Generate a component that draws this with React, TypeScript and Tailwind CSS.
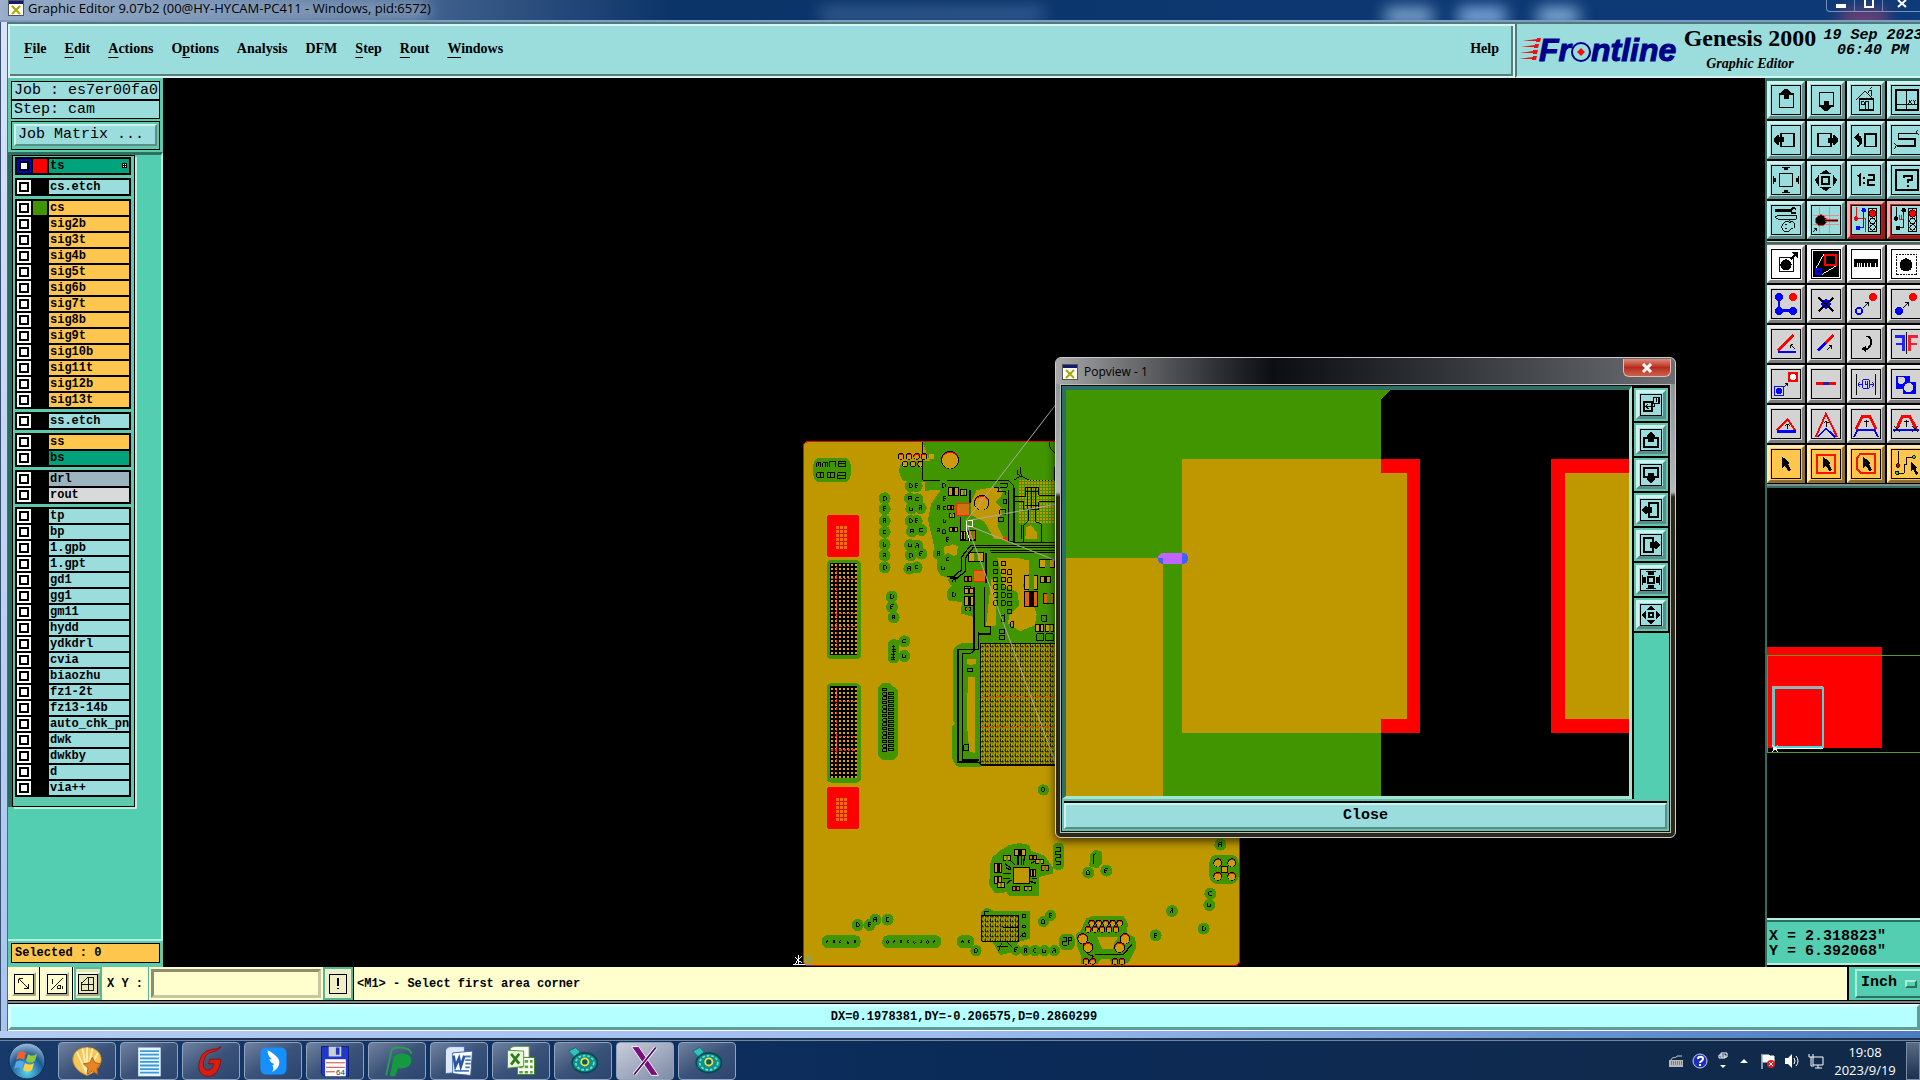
import React from "react";

type Point = [number, number];

type Layer = {
  name: string;
  fill: string;
  swatch?: string;
  active?: boolean;
};

const ORANGE = "bg-[#ffc64e]";
const AQUA = "bg-[#9bdcdc]";
const TEAL = "bg-[#00a37c]";

const layerGroups: Layer[][] = [
  [{ name: "ts", fill: TEAL, swatch: "bg-[#ff0000]", active: true }],
  [{ name: "cs.etch", fill: AQUA }],
  [
    { name: "cs", fill: ORANGE, swatch: "bg-[#419600]" },
    { name: "sig2b", fill: ORANGE },
    { name: "sig3t", fill: ORANGE },
    { name: "sig4b", fill: ORANGE },
    { name: "sig5t", fill: ORANGE },
    { name: "sig6b", fill: ORANGE },
    { name: "sig7t", fill: ORANGE },
    { name: "sig8b", fill: ORANGE },
    { name: "sig9t", fill: ORANGE },
    { name: "sig10b", fill: ORANGE },
    { name: "sig11t", fill: ORANGE },
    { name: "sig12b", fill: ORANGE },
    { name: "sig13t", fill: ORANGE },
  ],
  [{ name: "ss.etch", fill: AQUA }],
  [
    { name: "ss", fill: ORANGE },
    { name: "bs", fill: TEAL },
  ],
  [
    { name: "drl", fill: "bg-[#9cb4bf]" },
    { name: "rout", fill: "bg-[#d9d9d9]" },
  ],
  [
    "tp",
    "bp",
    "1.gpb",
    "1.gpt",
    "gd1",
    "gg1",
    "gm11",
    "hydd",
    "ydkdrl",
    "cvia",
    "biaozhu",
    "fz1-2t",
    "fz13-14b",
    "auto_chk_pnl",
    "dwk",
    "dwkby",
    "d",
    "via++",
  ].map((name) => ({ name, fill: AQUA })),
];

// [label, index of the underlined letter]
const menus: [string, number][] = [
  ["File", 0],
  ["Edit", 0],
  ["Actions", 0],
  ["Options", 1],
  ["Analysis", -1],
  ["DFM", -1],
  ["Step", 0],
  ["Rout", 0],
  ["Windows", 0],
];

const BEVEL_AQUA =
  "bg-[#9bdcdc] border-t-[#cdf3f1] border-l-[#cdf3f1] border-r-[#5b8c8c] border-b-[#5b8c8c]";

/* ---------- toolbar icons, all on a 30x30 grid ---------- */

const arrowUp = (
  <path d="M14 3h3v1h1v1h1v1h1v2h-2v6h-5V8h-3V6h1V5h1V4h1z" fill="#000" />
);

const icons: Record<string, React.ReactNode> = {
  up: (
    <>
      <rect x="8" y="9" width="15" height="14" fill="none" stroke="#000" strokeWidth="2" />
      {arrowUp}
    </>
  ),
  down: (
    <>
      <rect x="8" y="7" width="15" height="14" fill="none" stroke="#000" strokeWidth="2" />
      <g transform="translate(0 30) scale(1 -1)">{arrowUp}</g>
    </>
  ),
  left: (
    <>
      <rect x="10" y="8" width="14" height="14" fill="none" stroke="#000" strokeWidth="2" />
      <g transform="translate(-1 30) rotate(-90)">{arrowUp}</g>
    </>
  ),
  right: (
    <>
      <rect x="6" y="8" width="14" height="14" fill="none" stroke="#000" strokeWidth="2" />
      <g transform="translate(31 0) rotate(90)">{arrowUp}</g>
    </>
  ),
  home: (
    <g fill="none" stroke="#000">
      <path d="M8 14h15v12H8z" strokeWidth="2" />
      <path d="M4 15L14 5l10 10M18 8V5h3v6M20 3l2-2M14 26v-9h4v9M10 17h3v3h-3zM8 14h16" />
    </g>
  ),
  quad: (
    <g fill="none" stroke="#000">
      <rect x="4" y="4" width="24" height="22" strokeWidth="2" />
      <path d="M15.500 4v22M4 19.500h24M18 15l3 4M21 15l-3 4M23 15l1 2 2-2M24 17v2" />
    </g>
  ),
  undo: (
    <>
      <rect x="14" y="9" width="12" height="13" fill="none" stroke="#000" strokeWidth="2" />
      <path d="M2 12l5-4v3h2l2 3v5l-3 3H5v-2h2l1-2v-3H7v2z" fill="#000" />
    </>
  ),
  snake: (
    <g fill="none" stroke="#000">
      <path d="M25 8H7v6h18v7H5" strokeWidth="2" />
      <path d="M25 8l3-4M25 8l4 1M5 21l-3-3M5 21l-3 4" />
    </g>
  ),
  zoomIn: (
    <>
      <rect x="8" y="8" width="14" height="14" fill="none" stroke="#000" strokeWidth="2" />
      <path d="M9 1h11l-3 2v1h-4V3zM9 29h11l-3-2v-1h-4v1zM1 10v10l2-3h1v-4H3zM29 10v10l-2-3h-1v-4h1z" />
    </>
  ),
  zoomOut: (
    <>
      <rect x="11" y="12" width="7" height="7" fill="none" stroke="#000" strokeWidth="2" />
      <path d="M15 4l5 4v1H9V8zM15 27l5-4v-1H9v1zM3 15l4-5h1v11H7zM27 15l-4-5h-1v11h1z" />
    </>
  ),
  ratio: (
    <path
      d="M6 11l3-2v12M13 12v2M13 17v2M17 10h7v5h-7v5h8"
      fill="none"
      stroke="#000"
      strokeWidth="2"
    />
  ),
  help: (
    <g fill="none" stroke="#000" strokeWidth="2">
      <rect x="4" y="4" width="24" height="22" />
      <path d="M13 13v-2h8v4h-4v3M17 20v2" />
    </g>
  ),
  tools: (
    <g fill="none" stroke="#000">
      <path d="M3 5h17" strokeWidth="3" />
      <path d="M26 3l-4-1-2 3 2 3 4-1" strokeWidth="2" />
      <path d="M3 12l4-2h19v4H7zM11 25c-2-6 3-9 8-9s7 5 4 8c-2 1-3 0-4 2s-6 3-8-1zM14 20h2M18 18h2M14 24h2" />
    </g>
  ),
  node: (
    <>
      <path d="M8 1v28M19 1v28M1 10h28M1 20h28" stroke="#e08a8a" />
      <circle cx="9.500" cy="15.500" r="6" fill="#000" stroke="#f33" />
      <path d="M14 15.500h14" stroke="#f33" strokeWidth="4" />
      <path d="M12 15.500h16" stroke="#000" strokeWidth="2" />
      <path d="M1 28l4-4M2 24h3v3" fill="none" stroke="#000" />
    </>
  ),
  signalBlue: (
    <>
      <path d="M4.500 1v12H14v15" fill="none" stroke="#f00" />
      <path d="M12.500 5v18h-6" fill="none" stroke="#00f" />
      <circle cx="4.500" cy="13.500" r="2.500" fill="#f00" />
      <circle cx="12.500" cy="4.500" r="2.500" fill="#00f" />
      <circle cx="6.500" cy="23.500" r="2.500" fill="#00f" />
      <g fill="none" stroke="#000">
        <rect x="17.500" y="2.500" width="9" height="25" />
        <circle cx="22" cy="8" r="4" fill="#f00" />
        <circle cx="22" cy="16" r="3" />
        <circle cx="22" cy="23" r="3" />
      </g>
    </>
  ),
  signalDark: (
    <>
      <path d="M4.500 1v12M12.500 5v18h-6" fill="none" stroke="#000" />
      <path d="M7 14h5M8 10v4M10 10v4M12 10v4" stroke="#f00" />
      <circle cx="4.500" cy="13.500" r="2.500" />
      <circle cx="12.500" cy="4.500" r="2.500" />
      <circle cx="6.500" cy="23.500" r="2.500" />
      <g fill="none" stroke="#000">
        <rect x="17.500" y="2.500" width="9" height="25" />
        <circle cx="22" cy="8" r="4" fill="#f00" />
        <circle cx="22" cy="16" r="3" />
        <circle cx="22" cy="23" r="3" />
      </g>
    </>
  ),
  pad: (
    <>
      <rect x="7.500" y="8.500" width="15" height="15" fill="none" stroke="#000" />
      <circle cx="15" cy="16" r="6" />
      <path d="M20 10l5-5" stroke="#000" strokeWidth="2" />
      <path d="M21 2h7v7l-2-2-3-3z" />
    </>
  ),
  resize: (
    <>
      <rect x="1" y="1" width="28" height="28" fill="#000" />
      <path d="M13 4L4 20M26 17L11 26" stroke="#fff" />
      <rect x="14" y="5" width="12" height="11" fill="none" stroke="#f00" strokeWidth="2" />
      <rect x="4" y="20" width="6" height="6" fill="none" stroke="#00f" strokeWidth="2" />
    </>
  ),
  ruler: (
    <path d="M2 10h26v8h-2v-4h-1v4h-2v-4h-1v4h-2v-4h-1v4h-2v-4h-1v4h-2v-4h-1v4h-2v-4h-1v4H9v-4H8v4H6v-4H5v4H2z" />
  ),
  select: (
    <>
      <rect x="4.500" y="4.500" width="22" height="22" fill="none" stroke="#000" strokeDasharray="2 1" />
      <circle cx="15" cy="16" r="7" />
    </>
  ),
  connect: (
    <>
      <path d="M7.500 7v15H22" fill="none" stroke="#00f" strokeWidth="3" />
      <circle cx="7.500" cy="7.500" r="4.500" fill="#00f" />
      <circle cx="22.500" cy="7.500" r="4.500" fill="#f00" />
      <circle cx="7.500" cy="22.500" r="4.500" fill="#00f" />
      <circle cx="22.500" cy="22.500" r="4.500" fill="#00f" />
    </>
  ),
  remove: (
    <>
      <circle cx="15" cy="15" r="5" fill="#00f" />
      <path d="M7 8l16 15M23 8L7 23" stroke="#000" strokeWidth="2" />
    </>
  ),
  copy: (
    <>
      <circle cx="22.500" cy="7.500" r="4.500" fill="#f00" />
      <circle cx="7.500" cy="22.500" r="3.500" fill="none" stroke="#00f" strokeWidth="2" />
      <path d="M12 19l6-6M14 13h4v4" fill="none" stroke="#000" />
    </>
  ),
  move: (
    <>
      <circle cx="22.500" cy="7.500" r="4.500" fill="#f00" />
      <circle cx="7.500" cy="22.500" r="4.500" fill="#00f" />
      <path d="M12 19l6-6M14 13h4v4" fill="none" stroke="#000" />
    </>
  ),
  angle: (
    <>
      <path d="M6 22L23 5" stroke="#f00" strokeWidth="3" />
      <path d="M6 24h20" stroke="#00f" strokeWidth="2" />
      <path d="M24 20l-4-4M20 19v-3h3" fill="none" stroke="#000" />
    </>
  ),
  stretch: (
    <>
      <path d="M6 22l8-8" stroke="#00f" strokeWidth="3" />
      <path d="M14 14l9-9" stroke="#f00" strokeWidth="3" />
      <path d="M17 21l4-4M18 17h3v3" fill="none" stroke="#000" />
    </>
  ),
  rotate: (
    <>
      <path d="M15 7h3l2 3v6l-3 4h-5" fill="none" stroke="#000" strokeWidth="2" />
      <path d="M10 20l5-3v7z" />
    </>
  ),
  mirror: (
    <g fill="none" strokeWidth="3">
      <path d="M3 7h9v16M4 15h8" stroke="#22f" />
      <path d="M19 23V7h9M19 15h8" stroke="#e23" />
      <path d="M15.500 2v24" stroke="#000" strokeWidth="1" />
    </g>
  ),
  swap: (
    <>
      <rect x="17" y="2" width="11" height="11" fill="#f00" />
      <circle cx="22.500" cy="7.500" r="3.500" fill="#fff" />
      <rect x="2.500" y="17.500" width="10" height="10" fill="none" stroke="#00f" />
      <circle cx="7.500" cy="22.500" r="3.500" fill="#00f" />
      <path d="M13 18l4-4M14 14h3v3" fill="none" stroke="#000" />
    </>
  ),
  merge: (
    <>
      <path d="M4 14.500h22" stroke="#f00" strokeWidth="3" />
      <path d="M12 14.500h6" stroke="#22a" strokeWidth="3" />
    </>
  ),
  spacing: (
    <g fill="none">
      <path d="M4.500 4v23M25.500 4v23" stroke="#000" />
      <path d="M6 15.500h5M19 15.500h5M9 13l-3 2.500L9 18M21 13l3 2.500-3 2.500M11.500 10.500h7v9h-7zM14 12v4h3M16.500 12v7" stroke="#00f" />
    </g>
  ),
  union: (
    <>
      <path d="M4 6h15v7h7v13H12v-6H4z" fill="#00f" />
      <circle cx="10" cy="11" r="4" fill="#d4d4d4" />
      <circle cx="18" cy="19" r="5" fill="#d4d4d4" />
    </>
  ),
  peak: (
    <>
      <path d="M5 22L17 10l8 12" fill="none" stroke="#f00" strokeWidth="2" />
      <path d="M5 23h21" stroke="#00f" strokeWidth="3" />
      <path d="M16.500 20v-5M14 17l2.500-2 2.500 2" fill="none" stroke="#000" />
    </>
  ),
  spike: (
    <>
      <path d="M4 29L15 4l12 25" fill="none" stroke="#f00" strokeWidth="2" />
      <path d="M6 29l9-9 10 9" fill="none" stroke="#00f" strokeWidth="2" />
      <path d="M15.500 18v-6M13 14l2.500-2 2.500 2" fill="none" stroke="#000" />
    </>
  ),
  plateau: (
    <>
      <path d="M4 21L11 7h8l7 14" fill="none" stroke="#f00" strokeWidth="3" />
      <path d="M2 29l4-8h18l4 8" fill="none" stroke="#00f" strokeWidth="2" />
      <path d="M15.500 18v-7M13 13l2.500-2 2.500 2" fill="none" stroke="#000" />
    </>
  ),
  plateauCut: (
    <>
      <path d="M5 20l6-13h8l7 13" fill="none" stroke="#f00" strokeWidth="3" />
      <path d="M1 21h28" stroke="#00f" strokeWidth="2" />
      <path d="M15.500 18v-7M13 13l2.500-2 2.500 2M2 17l7 7M9 17l-7 7M21 17l7 7M28 17l-7 7" fill="none" stroke="#000" />
    </>
  ),
  pick: <path d="M11 7l8 7-2 1 3 6-2 2-4-6-3 2z" />,
  pickBox: (
    <>
      <rect x="5" y="5" width="20" height="20" fill="none" stroke="#f01800" strokeWidth="2" />
      <path d="M12 7l8 7-2 1 3 6-2 2-4-6-3 2z" />
    </>
  ),
  pickPoly: (
    <>
      <path d="M9 4h16v21H10l-5-5V9z" fill="none" stroke="#f01800" strokeWidth="2" />
      <path d="M12 7l8 7-2 1 3 6-2 2-4-6-3 2z" />
    </>
  ),
  pickNet: (
    <>
      <path d="M6.500 1v15M6 25h7v-9h3V8h6" fill="none" stroke="#000" />
      <circle cx="6.500" cy="16.500" r="2" fill="#c00" stroke="#000" />
      <circle cx="5.500" cy="24.500" r="2" fill="#2d2" stroke="#000" />
      <circle cx="23.500" cy="7.500" r="2" fill="#2d2" stroke="#000" />
      <path d="M20 12l7 7-2 1 3 5-2 2-3-6-3 2z" />
    </>
  ),
  track: (
    <g fill="none" stroke="#000">
      <rect x="4" y="10" width="12" height="14" strokeWidth="3" />
      <rect x="19" y="4" width="8" height="9" strokeWidth="2" />
      <path d="M8 17h12v-4M11 13l-4 4 4 4M23 5v6" strokeWidth="2" />
    </g>
  ),
  // heavier drawings for the narrow buttons of the popup
  popUp: (
    <>
      <path d="M12 12H4v13h22V12h-8" fill="none" stroke="#000" strokeWidth="3" />
      <path d="M15 2l6 6v2h-2v8h-8v-8H9V8z" />
    </>
  ),
  popDown: (
    <>
      <path d="M12 18H4V5h22v13h-8" fill="none" stroke="#000" strokeWidth="3" />
      <path d="M15 28l6-6v-2h-2v-8h-8v8H9v2z" />
    </>
  ),
  popLeft: (
    <>
      <path d="M12 12V4h13v22H12v-8" fill="none" stroke="#000" strokeWidth="3" />
      <path d="M1 15l6-6h2v2h8v8H9v2H7z" />
    </>
  ),
  popRight: (
    <>
      <path d="M18 12V4H5v22h13v-8" fill="none" stroke="#000" strokeWidth="3" />
      <path d="M29 15l-6-6h-2v2h-8v8h8v2h2z" />
    </>
  ),
  popIn: (
    <>
      <rect x="11" y="11" width="8" height="8" fill="none" stroke="#000" strokeWidth="3" />
      <path d="M6 1h18l-5 3v3h-8V4zM6 29h18l-5-3v-3h-8v3zM1 6v18l3-5h3v-8H4zM29 6v18l-3-5h-3v-8h3z" />
    </>
  ),
  popOut: (
    <>
      <rect x="12" y="12" width="6" height="6" fill="none" stroke="#000" strokeWidth="2" />
      <path d="M15 1l6 5v2H9V6zM15 29l6-5v-2H9v2zM1 15l5-6h2v12H6zM29 15l-5-6h-2v12h2z" />
    </>
  ),
};

const Icon = ({ name, className }: { name: string; className: string }) => (
  <svg viewBox="0 0 30 30" className={className} shapeRendering="crispEdges" aria-hidden="true">
    {icons[name]}
  </svg>
);

const viewTools = [
  "up", "down", "home", "quad",
  "left", "right", "undo", "snake",
  "zoomIn", "zoomOut", "ratio", "help",
  "tools", "node", "signalBlue", "signalDark",
];

const editTools = [
  "pad", "resize", "ruler", "select",
  "connect", "remove", "copy", "move",
  "angle", "stretch", "rotate", "mirror",
  "swap", "merge", "spacing", "union",
  "peak", "spike", "plateau", "plateauCut",
  "pick", "pickBox", "pickPoly", "pickNet",
];

const popTools = ["track", "popUp", "popDown", "popLeft", "popRight", "popIn", "popOut"];

const toolSkin = (name: string) => {
  if (name.startsWith("signal"))
    return "bg-[#9bdcdc] border-t-[#e9b0b0] border-l-[#e9b0b0] border-r-[#a01818] border-b-[#a01818] ring-2 ring-inset ring-[#c22020]";
  if (["pad", "resize", "ruler", "select"].includes(name))
    return "bg-white border-t-[#f4f4f4] border-l-[#f4f4f4] border-r-[#8c8c8c] border-b-[#8c8c8c]";
  if (name.startsWith("pick"))
    return "bg-[#ffc64e] border-t-[#ffe9b4] border-l-[#ffe9b4] border-r-[#8f6f2c] border-b-[#8f6f2c]";
  if (editTools.includes(name))
    return "bg-[#d3d3d3] border-t-[#f0f0f0] border-l-[#f0f0f0] border-r-[#7c7c7c] border-b-[#7c7c7c]";
  return BEVEL_AQUA;
};

const ToolGrid = ({ tools }: { tools: string[] }) => (
  <div className="grid w-40 grid-cols-[repeat(4,38px)] gap-[2px] bg-black">
    {tools.map((name) => (
      <button
        key={name}
        aria-label={name}
        className={`flex h-[38px] w-[38px] items-center justify-center border-[3px] ${toolSkin(name)}`}
      >
        <Icon name={name} className="h-[30px] w-[30px] border border-black" />
      </button>
    ))}
  </div>
);

/* ---------- board artwork ---------- */

const glyphs = [
  "M-4 -6h6l3 3v6l-3 3h-6z",
  "M5 -6h-9v12h4M-4 0h7",
  "M-4 6v-12h8v12M-4 0h8",
  "M4 -5h-8v10h8",
  "M-4 -6v12h8M4 -2v8",
  "M-4 -6h7v6h-7v6M3 0v6",
];

const Blobs = ({ points, r = 18 }: { points: Point[]; r?: number }) => (
  <>
    {points.map(([x, y]) => (
      <circle key={`b${x}-${y}`} cx={x} cy={y} r={r} fill="#419600" />
    ))}
    {points.map(([x, y], i) => (
      <path
        key={`g${x}-${y}`}
        d={glyphs[i % glyphs.length]}
        transform={`translate(${x} ${y})`}
        fill="none"
        stroke="#000"
        strokeWidth="3"
      />
    ))}
  </>
);

const Pads = ({ points, r, red = true }: { points: Point[]; r: number; red?: boolean }) => (
  <>
    {points.map(([x, y]) => (
      <g key={`${x}-${y}`}>
        <circle cx={x} cy={y} r={r} fill={red ? "#f00" : "#bf9800"} stroke="#000" strokeWidth="3" />
        <circle cx={x} cy={y + 2} r={r - 2} fill="#cf9a10" />
      </g>
    ))}
  </>
);

const Chips = ({ boxes }: { boxes: [number, number, number, number][] }) => (
  <>
    {boxes.map(([x, y, w, h], i) => (
      <g key={`${x}-${y}`}>
        <rect x={x} y={y} width={w} height={h} fill={i % 3 === 2 ? "#e8600a" : "#d09a18"} stroke="#000" strokeWidth="3" />
        <rect x={x + w / 3} y={y} width={w / 3} height={h} fill={i % 2 ? "#419600" : "#000"} />
      </g>
    ))}
  </>
);

const Connector = ({ y }: { y: number }) => (
  <>
    <rect x="110" y={y} width="103" height="298" rx="14" fill="#419600" />
    <rect x="120" y={y + 8} width="80" height="277" fill="#000" />
    <rect x="120" y={y + 8} width="80" height="277" fill="url(#pins)" />
    <path
      d={`M122 ${y + 55}h76M122 ${y + 160}h76M122 ${y + 200}h76M140 ${y + 20}v250`}
      stroke="#f30"
      strokeWidth="4"
      strokeDasharray="7 6"
    />
  </>
);

const RedBlock = ({ y }: { y: number }) => (
  <>
    <rect x="111" y={y} width="96" height="126" rx="10" fill="#f00" />
    <rect x="138" y={y + 33} width="34" height="70" fill="url(#windows)" />
  </>
);

const Board = () => (
  <svg
    viewBox="163 78 1602 889"
    className="absolute left-0 top-0 h-[889px] w-[1602px]"
    shapeRendering="crispEdges"
    aria-label="Board"
  >
    <defs>
      <pattern id="pins" x="123" y="402" width="12" height="12" patternUnits="userSpaceOnUse">
        <rect width="6" height="6" fill="#d8a800" />
      </pattern>
      <pattern id="windows" x="138" y="288" width="12" height="12" patternUnits="userSpaceOnUse">
        <rect width="9" height="9" fill="#f07010" />
      </pattern>
      <pattern id="bga" x="570" y="640" width="15" height="15" patternUnits="userSpaceOnUse">
        <rect width="15" height="15" fill="#bf9800" />
        <path d="M1.500 0v9M0 10.500h12M7.500 6v6" stroke="#1c1c00" strokeWidth="3" />
        <path d="M13.500 3v6M6 1.500h6" stroke="#419600" strokeWidth="3" />
      </pattern>
      <pattern id="dots" width="9" height="9" patternUnits="userSpaceOnUse">
        <rect x="2" y="2" width="6" height="6" fill="#bf9800" />
      </pattern>
    </defs>

    <rect x="803.500" y="441.500" width="436" height="524" rx="5" fill="#bf9800" stroke="#e01000" />

    {/* upper half */}
    <g transform="translate(790 430) scale(.33333)">
      <path
        d="M397 36H795V640H572V1012H508q-18-6-22-32V890l8-10-6-12V670q4-24 26-30h34v-80l-36-10 4-34-40-4q-14-24 8-44l10-18-44-14q-10-20-8-46l-14-60-14-60 10-50 28-40-46 2v-26l-64-2q-20-20-12-46l14-14h76z"
        fill="#419600"
      />
      <rect x="70" y="84" width="112" height="72" rx="20" fill="#419600" />
      <path
        d="M80 112v-14h12v14M86 98v10M98 112v-14h16v14M106 98v14M118 110v-14h20v14M146 94h22v16h-22zM146 102h22M80 128h22v14h-22zM92 128v14M112 128h22v14h-22zM122 128v14M144 128h24v18h-24zM144 136h24"
        fill="none"
        stroke="#000"
        strokeWidth="3"
      />
      <path d="M398 36V151H656L672 168V338M780 36v16l14 18M672 150l20-12 30 14h72V110" fill="none" stroke="#000" strokeWidth="3" />
      <path
        d="M560 180l60-10 20 14-10 20-14 12 20 20-14 50 20 40h-30l-28-50-40-20v-40zM462 352l16-12 26 8-4 26-24 14-14-16zM622 384h60l36 8v36l-20 40 20 18 22 66-6 34-44 18-36-24 4-24 30-30-6-40-40-16zM604 446h14v140l-30 5zM708 292l14-6 18 20v20l-34 2zM532 686h26v14l-14 6-12-4zM534 740h22v230l-18-6-8-90z"
        fill="#bf9800"
      />
      <Pads points={[[333, 79], [357, 79], [380, 79], [402, 79]]} r={9} />
      <Pads points={[[345, 102], [369, 102], [391, 102]]} r={8} red={false} />
      <rect x="418" y="72" width="14" height="14" fill="#cf9a10" />
      <Pads points={[[480, 90]]} r={26} />
      <Pads points={[[575, 218]]} r={22} />
      <Blobs points={[[284, 205], [284, 237], [284, 273], [284, 306], [284, 343], [284, 376], [284, 412]]} />
      <Blobs
        points={[
          [362, 168], [380, 168], [360, 205], [382, 208], [364, 236], [392, 234], [362, 273], [380, 273],
          [366, 304], [394, 300], [360, 345], [382, 347], [362, 376], [394, 371], [358, 416], [380, 412],
        ]}
      />
      <Blobs
        points={[
          [461, 166], [464, 206], [446, 234], [464, 234], [464, 273], [446, 301], [462, 306], [473, 330],
          [446, 371], [474, 388], [459, 414], [493, 450], [491, 494],
        ]}
      />
      <Blobs points={[[305, 500], [306, 531], [311, 562], [343, 634], [343, 678]]} />
      <rect x="294" y="628" width="34" height="72" rx="14" fill="#419600" />
      <path d="M304 690h12M304 682h12M304 674h12M306 666h12M306 658h12M306 650h10M311 645v44" stroke="#000" strokeWidth="3" />
      <path d="M276 760h24l24 22v194l-14 14h-34l-12-12V772z" fill="#419600" />
      {Array.from({ length: 15 }, (_, i) => (
        <path
          key={i}
          d={`M278 ${775 + i * 13}h12v8h-12zM296 ${787 + i * 12}v7h14v-7z`}
          fill="none"
          stroke="#000"
          strokeWidth="3"
        />
      ))}
      <RedBlock y={255} />
      <Connector y={390} />
      <Connector y={760} />
      <RedBlock y={1071} />

      {/* placement area left of the popup */}
      <Chips
        boxes={[
          [476, 172, 30, 26], [512, 180, 18, 16], [472, 226, 20, 14], [478, 250, 16, 12], [480, 292, 22, 14],
          [536, 302, 22, 28], [512, 306, 14, 24], [536, 368, 44, 26], [524, 440, 20, 14], [524, 470, 18, 12],
          [524, 500, 28, 28], [526, 532, 16, 10], [524, 476, 26, 16], [704, 436, 40, 44], [704, 486, 40, 44],
          [750, 390, 44, 24], [752, 440, 30, 18], [762, 490, 30, 30], [738, 584, 24, 22], [768, 584, 24, 22],
        ]}
      />
      <rect x="500" y="220" width="38" height="36" fill="#d07010" stroke="#f20" strokeWidth="3" />
      <rect x="550" y="422" width="40" height="34" fill="#d07010" stroke="#f20" strokeWidth="3" />
      <rect x="640" y="320" width="16" height="12" fill="#f30" />
      <path
        d="M470 440h20l24-20v-38l28-36h252M480 444h22l24-20v-40l24-32h244M600 362h194M604 368h190M512 262v70h44v-30M540 180v40M552 470v140M588 368v90M584 470v120h18v22h-34M552 606v56l-10 8h-24v320h48M566 606v52h-62v338h60l10 8h220M656 180v154h16v-160"
        fill="none"
        stroke="#000"
        strokeWidth="4"
      />
      <rect x="684" y="150" width="110" height="128" fill="url(#dots)" />
      <path
        d="M672 200h34v-26h40v22h48M672 214h30v26h44v-24h48M716 240v30l-16 18v50M738 240v36l16 6v58M706 186h40M706 226h40M712 174v66M724 174v66M736 174v66M672 338h122M684 120v14l10 6-4-28M630 160h22v12h-22M612 172h14v10M640 210h10v12h-10zM630 240h18v14h-18zM626 262h14v14h-14zM694 286v40M620 186h28v8"
        fill="none"
        stroke="#000"
        strokeWidth="3"
      />
      {[400, 424, 448, 470, 494, 518].map((y) => (
        <path
          key={y}
          d={`M612 ${y - 6}h12v14h-12zM634 ${y - 6}h12v14h-12zM654 ${y + 20}h12v14h-12z`}
          fill="none"
          stroke="#000"
          strokeWidth="3"
        />
      ))}
      <path d="M634 558l10-4v22h-10zM662 576h10v16h-10zM628 600h16v12h-16zM628 618h16v12h-16zM756 556h14v18h-14zM740 612h22v20h-22zM768 612h22v20h-22z" fill="none" stroke="#000" strokeWidth="3" />
      <rect x="570" y="640" width="225" height="366" fill="url(#bga)" />
      <path d="M570 800h225M570 889h225" stroke="#d40" strokeWidth="3" strokeDasharray="14 10" />
      <path d="M572 1005V640H795M572 1005h223" fill="none" stroke="#000" strokeWidth="4" />
      <path d="M532 716h16v8h-16zM522 944h14v18h-14z" fill="none" stroke="#000" strokeWidth="3" />
      <circle cx="760" cy="1080" r="17" fill="#419600" />
      <path d="M755 1074h8v10h-8z" fill="none" stroke="#000" strokeWidth="3" />
    </g>

    {/* lower half */}
    <g transform="translate(790 800) scale(.33333)">
      <path
        d="M658 135l30-6 30 6 6 18 40 14 24 36v18l-40 10-2 38 2 18h-92l-6-10-36 2-16-24 2-60 8-24 24-20z"
        fill="#419600"
      />
      <Chips
        boxes={[
          [674, 148, 34, 18], [640, 168, 22, 14], [718, 166, 22, 14], [738, 180, 24, 12], [614, 192, 22, 26],
          [756, 198, 20, 14], [614, 230, 20, 22], [624, 248, 20, 14], [668, 260, 20, 12], [704, 260, 20, 12],
          [722, 210, 16, 20],
        ]}
      />
      <path d="M684 168v26M694 168v26M704 168l-4 26M644 190l20 16M648 204l14 6M640 220h22M640 236h20M650 250l14-10M660 180l16 16M724 190l14-8M720 244l18 6M726 236h16" fill="none" stroke="#000" strokeWidth="4" />
      <rect x="670" y="203" width="48" height="47" fill="#bf9800" stroke="#000" strokeWidth="4" />
      <rect x="788" y="128" width="34" height="82" rx="15" fill="#419600" />
      <path d="M798 144h14v10h-14v10h14v10h-14v10h14v10h-14" fill="none" stroke="#000" strokeWidth="3" />
      <path d="M900 165l14-16 22 6v34l-12 16-26-6z" fill="#419600" />
      <path d="M910 192v-28l8-4" fill="none" stroke="#000" strokeWidth="3" />
      <Blobs points={[[895, 218], [949, 212], [1291, 134], [1261, 281], [1258, 315], [1146, 333], [1241, 386], [1097, 406]]} />
      <rect x="1258" y="164" width="88" height="88" rx="24" fill="#419600" />
      <Pads points={[[1283, 188], [1325, 188], [1283, 229], [1325, 229]]} r={12} />
      <rect x="1295" y="200" width="18" height="18" fill="#cf9a10" stroke="#000" strokeWidth="3" />
      <Blobs points={[[203, 375], [239, 375], [256, 359], [293, 359]]} />
      <rect x="96" y="406" width="116" height="38" rx="16" fill="#419600" />
      <rect x="277" y="406" width="176" height="38" rx="16" fill="#419600" />
      <rect x="501" y="406" width="52" height="38" rx="16" fill="#419600" />
      {[112, 132, 152, 174, 195, 292, 313, 333, 354, 374, 394, 413, 433, 517, 537].map((x, i) => (
        <path
          key={x}
          d={glyphs[(i + 1) % glyphs.length]}
          transform={`translate(${x} 426) scale(.6)`}
          fill="none"
          stroke="#000"
          strokeWidth="5"
        />
      ))}
      <path d="M572 340l16-18 22 10h110v84l-34 10-16 30-40 10-22-40-36-10z" fill="#419600" />
      <rect x="576" y="346" width="110" height="78" fill="url(#bga)" />
      <path d="M576 346h110v78H576zM584 346v-12h12M620 440h34M626 452l10-24M650 424l30 30M690 410l16-14M640 384h46" fill="none" stroke="#000" strokeWidth="3" />
      <Blobs points={[[558, 452], [678, 450], [707, 452], [735, 452], [763, 452], [793, 452], [760, 365], [782, 346]]} r={17} />
      <path d="M697 344h10v8h-10zM697 376h10v8h-10zM697 402h10v8h-10z" fill="none" stroke="#000" strokeWidth="3" />
      <rect x="808" y="402" width="46" height="48" rx="14" fill="#419600" />
      <path d="M818 412h12v12h-12v12h12M836 412h10v10h-10zM836 436v-14h10" fill="none" stroke="#000" strokeWidth="3" />
      <path
        d="M888 356l18-8h94l14 22-4 28 26 16 2 30-20 40-14 10h-40l-4-16h-28l-10 14h-50l2-22-12-30-4-36 14-12z"
        fill="#419600"
      />
      <path d="M922 412h62l-12 18-2 16h-34z" fill="#bf9800" />
      <Pads points={[[905, 369], [926, 369], [947, 369], [968, 369], [989, 369], [895, 388], [916, 388], [936, 388], [957, 388], [978, 388]]} r={9} />
      <Pads points={[[878, 416], [1005, 416], [894, 442], [989, 442]]} r={15} />
      <Pads points={[[888, 484], [908, 484], [975, 484], [996, 484]]} r={9} />
      <path d="M915 463h86l24-30M890 460l20 10-10 10" fill="none" stroke="#000" strokeWidth="4" />
      <path d="M14 470l22 20M36 468l-22 24M8 494h44M26 466v28" stroke="#fff" strokeWidth="3" />
      <path d="M44 468l20 20M64 468l-22 20M44 494h28" stroke="#5ad" strokeWidth="3" />
    </g>

    {/* pointers from the board to the popup */}
    <path
      d="M1057 403L966 521M966 521l91-17M967 525l90 36M967 525l90 242"
      fill="none"
      stroke="#b0a8a8"
      shapeRendering="auto"
    />
    <path d="M966 521v8l4 12M968 520h4v6h-4" fill="none" stroke="#fff" />
  </svg>
);

const PopCanvas = () => (
  <svg viewBox="0 0 563 406" className="h-[406px] w-[563px] bg-black" shapeRendering="crispEdges" aria-label="Zoomed view">
    <path d="M0 0h324l-9 9v397H0z" fill="#419600" />
    <path d="M0 168h97v238H0z" fill="#bf9800" />
    <path d="M116 69h238v274H116zM485 69h78v274h-78z" fill="#f00" />
    <path d="M116 69h199v14h26v246h-26v14H116zM499 83h64v246h-64z" fill="#bf9800" />
    <rect x="92" y="163" width="30" height="11" rx="5" fill="#4060ff" />
    <path d="M97 163h19v11H97v-6h-5q0-4 5-5z" fill="#c066ff" />
  </svg>
);

/* ---------- window chrome ---------- */

const AppIcon = () => (
  <svg viewBox="0 0 16 16" className="h-4 w-4 shrink-0" aria-hidden="true">
    <rect x="0.500" y="0.500" width="15" height="15" fill="#fff" stroke="#555" />
    <rect x="1" y="1" width="14" height="3" fill="#141a70" />
    <path d="M4 6l8 8M12 6l-8 8" stroke="#a8a800" strokeWidth="2" />
  </svg>
);

const TitleBar = () => (
  <div className="relative flex h-[22px] shrink-0 items-start overflow-hidden border-b-2 border-[#7d9cc4] bg-linear-to-r from-[#9fb4cf] via-[#0b3468] via-35% to-[#0d3a78] pl-2">
    <div className="absolute left-0 top-0 h-5 w-[430px] rounded-r-full bg-[#8fa5c1]/80 blur-sm" />
    <div className="absolute left-[820px] top-2 h-3 w-56 rounded bg-[#8fb0dd]/40 blur-sm" />
    <div className="absolute left-[1385px] top-2 h-4 w-12 rounded bg-[#a9cdf3]/80 blur-sm" />
    <div className="absolute left-[1458px] top-2 h-4 w-12 rounded bg-[#9cc3f5]/90 blur-sm" />
    <div className="absolute left-[1536px] top-2 h-4 w-11 rounded-full bg-[#9cc9ef]/90 blur-sm" />
    <div className="absolute left-[1840px] top-3 h-3 w-12 rounded bg-[#c44a70]/80 blur-sm" />
    <div className="relative flex h-4 items-center gap-1 font-['Open_Sans',sans-serif] text-[13px] leading-4 text-black">
      <AppIcon />
      <span className="whitespace-nowrap">Graphic Editor 9.07b2 (00@HY-HYCAM-PC411 - Windows, pid:6572)</span>
    </div>
    <div className="relative ml-auto flex h-3 w-[94px] shrink-0 rounded-bl border-b border-l border-[#9db7d8]/70 text-white">
      <button aria-label="Minimize" className="flex w-7 items-center justify-center border-r border-[#9db7d8]/60">
        <span className="h-1 w-2.5 bg-white" />
      </button>
      <button aria-label="Restore" className="flex w-7 items-start justify-center border-r border-[#9db7d8]/60">
        <span className="h-2 w-2.5 border-2 border-t-0 border-white" />
      </button>
      <button aria-label="Close window" className="flex flex-1 items-start justify-center">
        <svg viewBox="0 0 12 8" className="h-2 w-3">
          <path d="M2 0l8 7M10 0L2 7" stroke="#fff" strokeWidth="2" />
        </svg>
      </button>
    </div>
  </div>
);

const Logo = () => (
  <svg viewBox="0 0 160 40" className="h-10 w-[160px] shrink-0" role="img" aria-label="Frontline">
    <path d="M4 7l14-2v-1h4l-1 4h-4V7zM2 13l14-2v-1h4l-1 4h-4v-1zM1 19l13-2v-1h5l-1 4h-4v-1zM0 25l14-2v-1h4l-1 4h-4v-1z" fill="#f01010" />
    <text x="20" y="27" fontSize="32" fontWeight="700" fontStyle="italic" fontFamily="Liberation Sans, sans-serif" fill="#000088" stroke="#000088">
      Fr
    </text>
    <circle cx="62" cy="18" r="9" fill="none" stroke="#000088" strokeWidth="2" />
    <path d="M62 14l4 4-4 4-4-4z" fill="#f01010" />
    <text x="72" y="27" fontSize="32" fontWeight="700" fontStyle="italic" fontFamily="Liberation Sans, sans-serif" fill="#000088" stroke="#000088">
      ntline
    </text>
  </svg>
);

const MenuBar = () => (
  <div className="flex h-14 shrink-0 border-t-2 border-[#4f7b7b] font-['Liberation_Serif',serif] font-bold text-black">
    <nav className="flex flex-1 items-center gap-[18px] border-2 border-[#d5f5f3] bg-[#9bdcdc] pb-1 pl-3.5 pr-[14px] text-[14px] shadow-[inset_-2px_-2px_0_#55807f]">
      {menus.map(([label, u]) => (
        <button key={label} className="leading-5">
          {label.slice(0, Math.max(u, 0))}
          {u >= 0 && <span className="underline underline-offset-4">{label[u]}</span>}
          {label.slice(u + 1)}
        </button>
      ))}
      <button className="ml-auto leading-5">Help</button>
    </nav>
    <div className="flex w-[405px] shrink-0 overflow-hidden border-b-2 border-l-2 border-b-[#d5f5f3] border-l-[#4f7b7b] bg-[#9bdcdc] pl-[2px]">
      <div className="pt-2.5">
        <Logo />
      </div>
      <div className="flex w-[142px] shrink-0 flex-col items-center">
        <div className="whitespace-nowrap text-[24px] leading-7">Genesis 2000</div>
        <div className="pt-[2px] text-[14px] italic leading-5">Graphic Editor</div>
      </div>
      <div className="w-[104px] shrink-0 whitespace-pre pt-1 text-center font-['Liberation_Mono',monospace] text-[15px] italic leading-[15px]">
        <div>19 Sep 2023</div>
        <div>06:40 PM</div>
      </div>
    </div>
  </div>
);

const LayerRow = ({ layer }: { layer: Layer }) => {
  const id = `layer-${layer.name}`;
  return (
    <div className="flex h-3.5 gap-[2px]">
      <input
        type="checkbox"
        id={id}
        className={`h-3.5 w-3.5 shrink-0 appearance-none border-2 bg-white shadow-[inset_0_0_0_2px_#000] ${
          layer.active ? "border-[#0000c8]" : "border-white"
        }`}
      />
      <span className={`w-3.5 shrink-0 ${layer.swatch ?? "bg-black"}`} />
      <label
        htmlFor={id}
        className={`flex min-w-0 flex-1 items-center overflow-hidden pl-px text-[12px] leading-[14px] ${layer.fill}`}
      >
        {layer.name}
        {layer.active && (
          <span className="ml-auto mr-0.5 grid grid-cols-2 gap-px border border-black bg-black">
            <i className="h-px w-px bg-white" />
            <i className="h-px w-px bg-white" />
            <i className="h-px w-px bg-white" />
            <i className="h-px w-px bg-white" />
          </span>
        )}
      </label>
    </div>
  );
};

const LayerPanel = () => (
  <aside className="flex w-[155px] shrink-0 flex-col bg-[#5fc9ae] font-['Liberation_Mono',monospace] text-[15px] text-black">
    <div className="mx-[3px] mt-[3px] h-[19px] whitespace-nowrap border border-black bg-[#9bdcdc] pl-0.5 leading-[18px]">
      Job : es7er00fa0
    </div>
    <div className="mx-[3px] h-[19px] border border-black bg-[#9bdcdc] pl-0.5 leading-[18px]">Step: cam</div>
    <div className="mx-[3px] mt-[2px] border border-black p-[2px]">
      <button className={`h-[22px] w-full whitespace-nowrap border-2 pl-0.5 text-left leading-[18px] ${BEVEL_AQUA}`}>
        Job Matrix ...
      </button>
    </div>
    <div className="mt-[2px] flex flex-1 flex-col items-start border-b-2 border-r-2 border-t-[3px] border-b-[#b5efe0] border-r-[#b5efe0] border-t-[#2d7060] bg-[#54ceb0]">
      <div className="border-l-4 border-[#2d6a5c]">
        <div className="mr-[2px] flex w-[123px] flex-col gap-[3px] border border-black bg-[#5fc9ae] pb-[9px] pl-[2px] pr-[3px] pt-px font-bold shadow-[2px_2px_0_#b5efe0]">
          {layerGroups.map((group) => (
            <div key={group[0].name} className="flex flex-col gap-[2px] bg-black p-[2px]">
              {group.map((layer) => (
                <LayerRow key={layer.name} layer={layer} />
              ))}
            </div>
          ))}
        </div>
      </div>
    </div>
    <div className="mx-[3px] mb-1 mt-[2px] h-5 border border-black bg-[#ffc64e] pl-[3px] text-[12px] font-bold leading-[18px]">
      Selected : 0
    </div>
  </aside>
);

const Toolbox = () => (
  <aside className="flex w-[155px] shrink-0 flex-col overflow-hidden border-l-2 border-[#2d7060] bg-black">
    <div className="border-t-[3px] border-[#2d7060]">
      <ToolGrid tools={viewTools} />
    </div>
    <div className="mt-[2px] h-1 shrink-0 border-b border-t border-b-[#6d7d78] border-t-[#9fe8d6] bg-[#5b5b5b]" />
    <div>
      <ToolGrid tools={editTools} />
    </div>
    <div className="mt-px h-1 shrink-0 border-b-2 border-[#2d7060] bg-[#8b8b8b]" />
    <div className="relative flex-1">
      <svg viewBox="0 0 153 430" className="absolute left-0 top-0 h-[430px] w-[153px]" shapeRendering="crispEdges" aria-label="Overview">
        <rect x="0" y="159" width="115" height="101" fill="#f00" />
        <path d="M160 167.500H0.500v97H160" fill="none" stroke="#5a9a20" />
        <rect x="7" y="200" width="49" height="59" fill="none" stroke="#48d8e0" strokeWidth="2" />
        <path d="M6 259V199h50" fill="none" stroke="#aaa" strokeWidth="2" />
        <path d="M6 260h50M5 264l6-7M5 257l6 7" stroke="#fff" />
      </svg>
    </div>
    <div className="h-[47px] shrink-0 whitespace-pre border-b-2 border-t-2 border-b-[#b5efe0] border-t-[#b5efe0] bg-[#54ceb0] pl-0.5 pt-[9px] font-['Liberation_Mono',monospace] text-[15px] font-bold leading-[15px] text-black shadow-[inset_0_2px_0_#2d7060]">
      {'X = 2.318823"\nY = 6.392068"'}
    </div>
    <div className="h-[2px] shrink-0" />
  </aside>
);

const snapModes = [
  { d: "M4 4l11 11M4 9V4h5M10 15h5v-5", skin: "w-8 border-r border-black bg-[#ffffce]" },
  { d: "M3 17L17 3M5 4v6M11 15h3v-3h-3zM16 12v4", skin: "w-8 border-r border-black bg-[#ffffce]" },
  { d: "M9.500 3h7v14h-14V9zM2 10h15M10 3v14", skin: "w-[28px] border-2 border-[#54b89a] bg-[#e8e8b8]" },
];

const MessageBar = () => (
  <div className="flex h-[34px] shrink-0 items-stretch border-b border-black bg-[#ffffce] font-['Liberation_Mono',monospace] text-[12px] font-bold text-black">
    {snapModes.map(({ d, skin }, i) => (
      <button key={d} aria-label={`Snap mode ${i + 1}`} className={`mr-px flex shrink-0 items-center justify-center ${skin}`}>
        <span className="border-2 border-b-[#a8a888] border-l-[#f6f6e0] border-r-[#a8a888] border-t-[#f6f6e0]">
          <svg viewBox="0 0 20 20" className="h-5 w-5 border border-black" shapeRendering="crispEdges">
            <path d={d} fill="none" stroke="#000" />
          </svg>
        </span>
      </button>
    ))}
    <label htmlFor="xy" className="flex w-[46px] items-center whitespace-nowrap border-r border-[#54b89a] pl-1">
      X Y :
    </label>
    <input
      id="xy"
      className="my-[2px] ml-[2px] w-[170px] border-[3px] border-b-[#c8c8a0] border-l-[#8d8d70] border-r-[#c8c8a0] border-t-[#8d8d70] bg-[#ffffce] px-1 outline-none"
    />
    <button
      aria-label="Alert"
      className="ml-[2px] flex w-[30px] items-center justify-center border-2 border-[#54b89a] bg-[#f0f0c8]"
    >
      <svg viewBox="0 0 18 20" className="h-5 w-[18px] border border-black" shapeRendering="crispEdges">
        <path d="M9 3v9M9 14v2" stroke="#000" strokeWidth="2" />
      </svg>
    </button>
    <div className="flex flex-1 items-center border-l border-black pl-[3px]">{"<M1> - Select first area corner"}</div>
    <div className="flex w-[73px] shrink-0 overflow-hidden border-l-2 border-black bg-[#54ceb0] py-[2px] pl-1.5">
      <button className="flex w-20 shrink-0 items-center gap-2 border-2 border-b-[#2d7060] border-l-[#a8eedd] border-r-[#2d7060] border-t-[#a8eedd] pl-1 text-[15px]">
        Inch
        <span className="h-2 w-3 border-2 border-b-[#2d7060] border-l-[#a8eedd] border-r-[#2d7060] border-t-[#a8eedd]" />
      </button>
    </div>
  </div>
);

const Popview = () => (
  <section className="absolute left-[1055px] top-[357px] flex w-[621px] flex-col rounded-md border border-[#c9ccd0] bg-linear-to-b from-[#8a8d90] from-0% via-[#b4b8ba] via-28% to-[#2c2a16] to-29% px-1 pb-1 shadow-[0_3px_10px_rgba(0,0,0,0.7)]">
    <header className="-mx-1 flex h-[26px] items-center gap-1.5 rounded-t-md bg-linear-to-r from-[#a8a8a8] via-[#0b0f14] via-35% to-[#6b6e72] pl-1.5 pt-px font-['Open_Sans',sans-serif] text-[12px] text-black">
      <AppIcon />
      <span>Popview - 1</span>
      <button
        aria-label="Close popview"
        className="mb-auto ml-auto mr-1 flex h-[18px] w-12 items-center justify-center rounded-b-md border border-t-0 border-[#e6b8b0] bg-linear-to-b from-[#dd8a78] via-[#b8291c] to-[#c9604f]"
      >
        <svg viewBox="0 0 12 10" className="h-2.5 w-3">
          <path d="M2 1l8 8M10 1L2 9" stroke="#fff" strokeWidth="3" />
        </svg>
      </button>
    </header>
    <div className="border border-[#b8bcc0] bg-[#0a0a0a] p-px">
      <div className="flex bg-black">
        <div className="border-b-[3px] border-l-4 border-r-[3px] border-t-4 border-b-[#a6e4d2] border-l-[#2f6f63] border-r-[#a6e4d2] border-t-[#2f6f63]">
          <PopCanvas />
        </div>
        <div className="ml-[2px] flex flex-1 flex-col gap-[2px] pt-[2px]">
          {popTools.map((name) => (
            <button key={name} aria-label={`popview ${name}`} className="h-[33px] w-[34px] border-2 border-[#62c6ac]">
              <span className={`flex h-full w-full items-center justify-center border-[3px] ${BEVEL_AQUA}`}>
                <Icon name={name} className="h-[22px] w-[22px] border border-black" />
              </span>
            </button>
          ))}
          <div className="flex-1 bg-[#54ceb0]" />
        </div>
      </div>
      <div className="border-2 border-[#62c6ac]">
        <button
          className={`h-[26px] w-full border-2 text-center font-['Liberation_Mono',monospace] text-[15px] font-bold leading-[22px] text-black ${BEVEL_AQUA}`}
        >
          Close
        </button>
      </div>
    </div>
  </section>
);

/* ---------- taskbar ---------- */

const Disc = () => (
  <>
    <ellipse cx="22" cy="22" rx="14" ry="11" fill="#128f8a" stroke="#0a4a50" strokeWidth="2" />
    <ellipse cx="22" cy="22" rx="10" ry="8" fill="none" stroke="#5fe0d8" strokeDasharray="3 2" strokeWidth="2" />
    <circle cx="22" cy="21" r="4" fill="#0a5a60" stroke="#f0e040" strokeWidth="2" />
    <path d="M4 9l8-4 5 5-7 5zM6 23l5 6" fill="#30c0c0" stroke="#0a6a70" />
  </>
);

const apps: { name: string; open?: boolean; art: React.ReactNode }[] = [
  {
    name: "Shell",
    art: (
      <>
        <path d="M20 36C8 32 2 22 5 14c2-6 8-9 15-9s13 3 15 9c3 8-3 18-15 22z" fill="#f5c65a" stroke="#c98a20" />
        <path d="M20 35L9 10M20 35L15 6M20 35V5M20 35l6-29M20 35L32 11" stroke="#fff0b8" strokeWidth="2" />
        <path d="M26 16l3 6 6 1-4 5 1 7-6-4-6 4 1-7-5-5 7-1z" fill="#e88428" stroke="#b85a10" />
      </>
    ),
  },
  {
    name: "Notes",
    art: (
      <>
        <rect x="8" y="5" width="25" height="32" fill="#e8f5ff" />
        <path d="M10 9h21M10 13h21M10 17h21M10 21h21M10 25h21M10 29h21M10 33h21" stroke="#3a9ad8" strokeWidth="2" />
      </>
    ),
  },
  {
    name: "G",
    art: (
      <path
        d="M31 4c-3 6-10 5-15 8-4 4-6 13-3 17 4 3 9 0 10-6h-6l2-5h12c-1 11-6 19-14 19C9 37 5 31 7 22 9 11 15 8 22 7c4 0 6-1 9-3z"
        fill="#d81e12"
        stroke="#8c0c08"
      />
    ),
  },
  {
    name: "Wing",
    art: (
      <>
        <rect x="6" y="5" width="29" height="30" rx="6" fill="#1590ff" />
        <path d="M14 8c6 3 13 8 13 13 0 6-4 9-8 11 2-3 2-5 0-7 1 0 2-1 2-2-3-1-5-3-5-5h3c-4-3-5-6-5-10z" fill="#fff" />
      </>
    ),
  },
  {
    name: "Disk",
    art: (
      <>
        <path d="M5 4h30v33H8l-3-3z" fill="#2238c8" stroke="#0c1870" />
        <rect x="13" y="4" width="14" height="11" fill="#c8d0d8" />
        <rect x="21" y="5" width="4" height="8" fill="#2238c8" />
        <rect x="9" y="18" width="23" height="19" fill="#fff" />
        <path d="M10 22h21M10 27h21M10 32h10" stroke="#c03030" />
        <text x="21" y="35" fontSize="9" fontFamily="Liberation Sans, sans-serif" fill="#333">
          64
        </text>
      </>
    ),
  },
  {
    name: "P",
    art: (
      <>
        <path d="M8 36l6-28c2-4 20-5 22 4" fill="none" stroke="#28a050" strokeWidth="2" />
        <path d="M12 37l4-20c1-7 20-8 20 2 0 9-10 10-15 9l-3 9z" fill="#149a40" />
      </>
    ),
  },
  {
    name: "Word",
    art: (
      <>
        <path d="M5 9c0-3 3-5 6-5h15v28l-21 2z" fill="#dce8f8" stroke="#3a6ab0" />
        <path d="M13 11l22-2-2 27-20-2z" fill="#fff" stroke="#3060a0" />
        <path d="M15 31h16M27 15h6M27 19h6M27 23h6M27 27h5" stroke="#4a78c0" strokeWidth="2" />
        <path d="M14 14l2 12 4-9 2 9 4-12" fill="none" stroke="#2a56a0" strokeWidth="3" />
      </>
    ),
  },
  {
    name: "Excel",
    art: (
      <>
        <path d="M8 6q2-2 5-2h16v12H8z" fill="#fff" stroke="#58a030" />
        <rect x="16" y="16" width="19" height="19" fill="#fff" stroke="#3a8020" />
        <path d="M24 19h4v3h-4zM30 19h3v3h-3zM18 25h4v3h-4zM24 25h4v3h-4zM30 25h3v3h-3zM18 31h4v3h-4zM24 31h4v3h-4zM30 31h3v3h-3z" fill="#5aa838" />
        <path d="M5 8l18 1v17L5 28z" fill="#e8f6dc" stroke="#4a9028" />
        <path d="M9 12l9 11M18 12L9 24" stroke="#2f7a18" strokeWidth="3" />
      </>
    ),
  },
  { name: "Disc one", art: <Disc /> },
  {
    name: "X server",
    open: true,
    art: (
      <>
        <path d="M5 4h8l22 32h-8z" fill="#7a1080" stroke="#fff" />
        <path d="M32 5L8 35" stroke="#fff" strokeWidth="4" />
        <path d="M32 5L8 35" stroke="#500860" strokeWidth="2" />
      </>
    ),
  },
  { name: "Disc two", art: <Disc /> },
];

const Taskbar = () => (
  <footer className="flex h-10 shrink-0 items-center border-t border-[#6f87a5] bg-linear-to-r from-[#183a6a] via-[#0a2a58] to-[#122a48] pl-2 font-['Open_Sans',sans-serif] text-white">
    <button aria-label="Start" className="mr-3">
      <svg viewBox="0 0 38 38" className="h-[38px] w-[38px]">
        <defs>
          <radialGradient id="orb" cx="50%" cy="80%" r="75%">
            <stop offset="0" stopColor="#5ad8f0" />
            <stop offset="0.600" stopColor="#1c5a94" />
            <stop offset="1" stopColor="#8fb0d0" />
          </radialGradient>
        </defs>
        <circle cx="19" cy="19" r="18" fill="url(#orb)" stroke="#0c2a4c" />
        <path d="M10 11c3-2 5-2 8 0l-2 7c-3-2-5-2-8 0z" fill="#f0602c" />
        <path d="M20 12c3 2 5 2 9 0l-2 7c-3 2-6 2-9 0z" fill="#90c83c" />
        <path d="M8 20c3-2 5-2 8 0l-2 7c-3-2-5-2-8 0z" fill="#58a8e8" />
        <path d="M17 21c3 2 6 2 9 0l-2 7c-3 2-5 2-9 0z" fill="#fcd048" />
      </svg>
    </button>
    <div className="flex gap-1">
      {apps.map((app) => (
        <button
          key={app.name}
          aria-label={app.name}
          className={`flex h-[38px] w-[58px] items-center justify-center rounded-sm border border-[#8ea3be] ${
            app.open
              ? "bg-linear-to-br from-[#c8cedb] to-[#7f8ba6]"
              : "bg-linear-to-br from-[#71829f] via-[#3b5379] to-[#2a4570]"
          }`}
        >
          <svg viewBox="0 0 40 40" className="h-9 w-9">
            {app.art}
          </svg>
        </button>
      ))}
    </div>
    <div className="ml-auto flex items-center gap-2">
      <svg viewBox="0 0 16 16" className="h-4 w-4">
        <path d="M1 7h14v7H1z" fill="#b8b8b8" />
        <path d="M3 7c1-4 5-1 6-4h5" fill="none" stroke="#ccc" />
        <path d="M3 9h11M3 11h11" stroke="#444" strokeDasharray="1 1" />
      </svg>
      <svg viewBox="0 0 16 16" className="h-4 w-4">
        <circle cx="8" cy="8" r="7" fill="#1a2fc0" stroke="#ccd" />
        <path d="M6 6c0-3 5-3 5 0 0 2-3 2-3 4M8 11v2" fill="none" stroke="#fff" strokeWidth="2" />
      </svg>
      <svg viewBox="0 0 10 18" className="ml-0.5 h-[18px] w-2.5">
        <path d="M3 1h6v4H3zM1 3h6v3H1z" fill="#0a2a58" stroke="#fff" />
        <path d="M2 13h6l-3 3z" fill="#fff" />
      </svg>
      <svg viewBox="0 0 8 6" className="ml-1 h-1.5 w-2">
        <path d="M0 5l4-4 4 4z" fill="#fff" />
      </svg>
      <svg viewBox="0 0 16 16" className="ml-1 h-4 w-4">
        <path d="M2 1v15M3 2h6l1 1h4v6H3z" fill="#fff" stroke="#fff" />
        <circle cx="11" cy="11" r="4" fill="#d82020" />
        <path d="M9 9l4 4M13 9l-4 4" stroke="#fff" />
      </svg>
      <svg viewBox="0 0 16 16" className="h-4 w-4">
        <path d="M1 5h3l4-4v14l-4-4H1z" fill="#fff" />
        <path d="M10 5q2 3 0 6M12 3q4 5 0 10" fill="none" stroke="#fff" />
      </svg>
      <svg viewBox="0 0 16 16" className="h-4 w-4">
        <path d="M5 4h10v8H5zM7 15h7M10 12v3M1 1v3h4V1M3 4v9h3" fill="none" stroke="#fff" strokeWidth="1" />
      </svg>
      <div className="w-[66px] text-center text-[13px] leading-[18px]">
        <div>19:08</div>
        <div>2023/9/19</div>
      </div>
      <button aria-label="Show desktop" className="h-[38px] w-3.5 border border-[#7b8ca4] bg-linear-to-b from-[#5a6b82] to-[#1c3050]" />
    </div>
  </footer>
);

const App = () => (
  <div className="relative flex h-screen flex-col overflow-hidden bg-[#0d3a78]">
    <TitleBar />
    <main className="flex min-h-0 flex-1">
      <div className="w-2 shrink-0 border-l border-r border-l-[#3a5070] border-r-[#55657a] bg-linear-to-b from-[#d8e4f8] to-[#a8c4f0]" />
      <div className="flex min-w-0 flex-1 flex-col">
        <MenuBar />
        <div className="flex min-h-0 flex-1 bg-black">
          <LayerPanel />
          <div className="relative flex-1 overflow-hidden bg-black">
            <Board />
          </div>
          <Toolbox />
        </div>
        <MessageBar />
        <div className="flex h-[30px] shrink-0 flex-col border-b-2 border-t-2 border-b-white border-t-[#7b8a8a] bg-black py-px font-['Liberation_Mono',monospace] text-[12px] font-bold text-black">
          <div className="flex-1 border-[3px] border-b-[#5f9c9c] border-l-[#d8ffff] border-r-[#5f9c9c] border-t-[#d8ffff] bg-[#b4ffff] text-center leading-5">
            DX=0.1978381,DY=-0.206575,D=0.2860299
          </div>
        </div>
      </div>
    </main>
    <div className="h-[9px] shrink-0 border-b-2 border-[#20324c] bg-linear-to-r from-[#b4ccf4] via-[#9cbcf0] to-[#4a7cc0]" />
    <Taskbar />
    <Popview />
  </div>
);

export default App;
